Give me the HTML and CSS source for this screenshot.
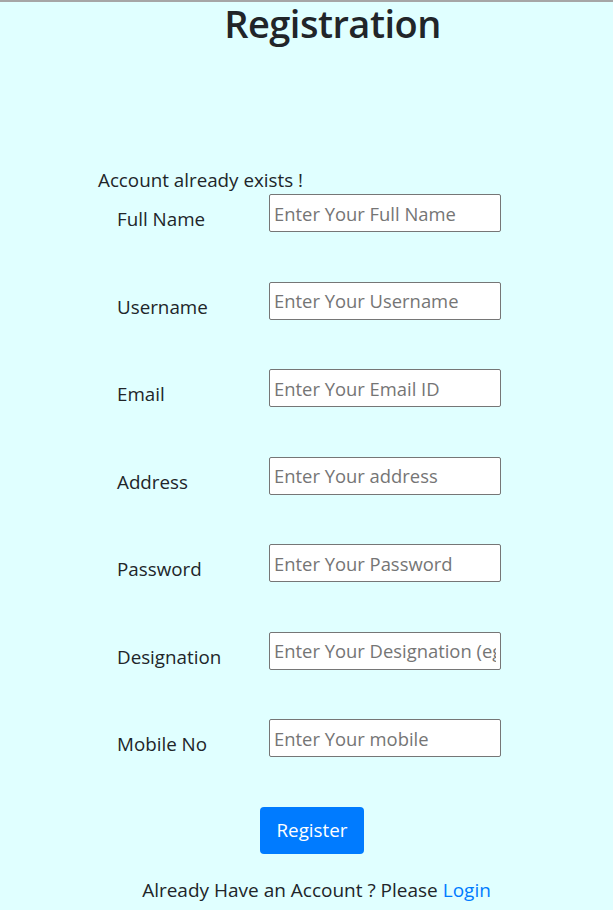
FILE: index.html
```html
<!DOCTYPE html>
<html>
<head>
<meta charset="utf-8">
<link rel="stylesheet" href="styles.css">
</head>
<body>
<div class="topline"></div>
<h1 class="title">Registration</h1>
<div class="msg">Account already exists !</div>
<form class="form">
  <div class="row"><label>Full Name</label><input type="text" placeholder="Enter Your Full Name"></div>
  <div class="row"><label>Username</label><input type="text" placeholder="Enter Your Username"></div>
  <div class="row"><label>Email</label><input type="text" placeholder="Enter Your Email ID"></div>
  <div class="row"><label>Address</label><input type="text" placeholder="Enter Your address"></div>
  <div class="row"><label>Password</label><input type="text" placeholder="Enter Your Password"></div>
  <div class="row"><label>Designation</label><input type="text" placeholder="Enter Your Designation (eg. Manager)"></div>
  <div class="row"><label>Mobile No</label><input type="text" placeholder="Enter Your mobile"></div>
  <div class="actions"><button type="button" class="btn">Register</button></div>
</form>
<p class="footer">Already Have an Account ? Please <a href="#">Login</a></p>
</body>
</html>
```
FILE: styles.css
```css
* { box-sizing: border-box; }
html, body { margin: 0; padding: 0; }
body {
  background: #e0ffff;
  font-family: "Open Sans", "Noto Sans", sans-serif;
  color: #212529;
  font-size: 18.8px;
  width: 613px;
  height: 910px;
  overflow: hidden;
}
.topline { height: 2px; background: #a6a6a6; }
.title {
  margin: 0;
  padding-left: 52px;
  text-align: center;
  font-size: 38px;
  font-weight: 600;
  letter-spacing: -0.5px;
  line-height: 42px;
}
.msg {
  margin-top: 123px;
  padding-left: 98px;
  line-height: 26px;
}
.form { margin: 0; }
.row {
  display: flex;
  align-items: center;
  height: 38px;
  margin-top: 1px;
  margin-bottom: 49.5px;
  padding-left: 117px;
}
.row label { width: 152px; padding-top: 12px; }
.row input {
  width: 232px;
  height: 38px;
  border: 1px solid #767676;
  border-radius: 2px;
  background: #fff;
  font-family: inherit;
  font-size: 18.4px;
  padding: 0 4px;
  color: #495057;
}
.row input::placeholder { color: #757575; }
.actions { padding-left: 11px; display: flex; justify-content: center; margin-top: 1px; }
.btn {
  background: #007bff;
  color: #fff;
  border: none;
  border-radius: 4px;
  font-family: inherit;
  font-size: 18.8px;
  width: 104px;
  height: 47px;
  padding: 0;
}
.footer {
  margin: 22px 0 0 0;
  padding-left: 20px;
  text-align: center;
  font-size: 19px;
  line-height: 28px;
}
.footer a { color: #007bff; text-decoration: none; }
```
